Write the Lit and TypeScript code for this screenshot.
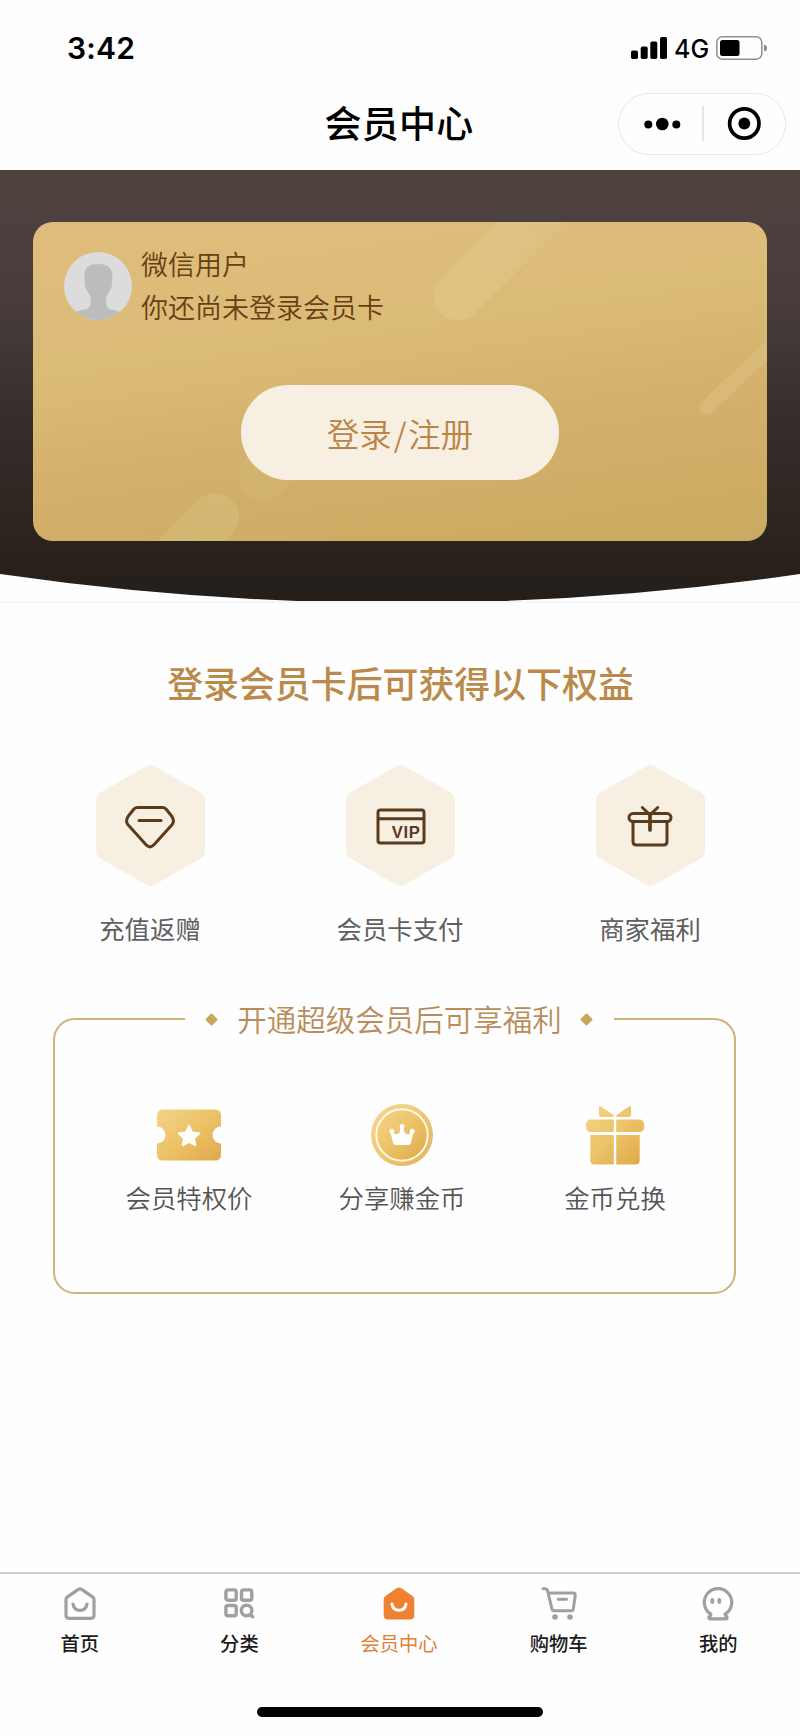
import { LitElement, html, css, svg, TemplateResult } from "lit";
import { customElement, property } from "lit/decorators.js";

const diamond = html`<svg class="glyph" viewBox="0 -3 50 47" width="50" height="47" fill="none" stroke="#5a3b1c" stroke-width="3" stroke-linejoin="round" stroke-linecap="round">
  <path d="M12.500 2.500H37.500Q39.500 2.500 41 4L46.800 11.300Q50 16 47 19.800L28.500 40.200Q25 43.500 21.500 40.200L3 19.800Q0 16 3.200 11.300L9 4Q10.500 2.500 12.500 2.500Z"/>
  <path d="M14 15.500H36"/>
</svg>`;

const vipCard = html`<svg class="glyph" viewBox="-1 -1 51 38" width="51" height="38">
  <g fill="none" stroke="#5a3b1c" stroke-width="3"><rect x="2" y="2" width="46" height="33" rx="2.500"/><path d="M2 10.800H48"/></g>
  <text x="15.800" y="30.200" font-family="Liberation Sans, sans-serif" font-weight="700" font-size="16.600" textLength="28" fill="#5a3b1c">VIP</text>
</svg>`;

const giftLine = html`<svg class="glyph" viewBox="0 0 46 42" width="46" height="42" fill="none" stroke="#5a3b1c" stroke-width="3" stroke-linecap="round" stroke-linejoin="round">
  <rect x="2" y="8.600" width="42" height="8" rx="4"/>
  <path d="M6 17V36.500Q6 40 9.500 40H36.500Q40 40 40 36.500V17"/>
  <path d="M15.300 2.500L23 9.800L30.700 2.500"/><path d="M23 10V25" stroke-width="3.700"/>
</svg>`;

const gold = (id: string) => svg`<defs>
  <linearGradient id=${id} x1="0" y1="0" x2="1" y2="1">
    <stop offset="0" stop-color="#f5d488"/><stop offset=".5" stop-color="#ecc267"/><stop offset="1" stop-color="#dfa84a"/>
  </linearGradient></defs>`;

const ticket = html`<svg viewBox="0 0 64 62" width="64" height="62">${gold("ticket")}
  <path fill="url(#ticket)" d="M6 5.500H58Q64 5.500 64 11.500V22.500A8.500 8.500 0 0 0 64 39.500V50.500Q64 56.500 58 56.500H6Q0 56.500 0 50.500V39.500A8.500 8.500 0 0 0 0 22.500V11.500Q0 5.500 6 5.500Z"/>
  <path fill="#fff" stroke="#fff" stroke-width="1.500" stroke-linejoin="round" d="M32 21.500L35.300 28.200L42.600 29.300L37.300 34.500L38.500 41.500L32 38.200L25.500 41.500L26.700 34.500L21.400 29.300L28.700 28.200Z"/>
</svg>`;

const coin = html`<svg viewBox="0 0 64 62" width="64" height="62">${gold("coin")}
  <circle cx="32" cy="31" r="31" fill="url(#coin)" fill-opacity=".9"/>
  <circle cx="32" cy="31" r="25.700" fill="url(#coin)" stroke="#fffbe9" stroke-width="1.900"/>
  <g fill="#fff"><path d="M22.500 27.500Q26 32.500 29.500 28.500L30.800 22.500H33.200L34.500 28.500Q38 32.500 41.500 27.500L43.500 28.500L40.900 39Q40.500 41 38.500 41H25.500Q23.500 41 23.100 39L20.500 28.500Z"/>
  <circle cx="32" cy="22.500" r="2.400"/><circle cx="21.800" cy="27.200" r="2.400"/><circle cx="42.200" cy="27.200" r="2.400"/></g>
</svg>`;

const giftSolid = html`<svg viewBox="0 0 64 62" width="64" height="62">
  <defs><linearGradient id="gift" gradientUnits="userSpaceOnUse" x1="5" y1="3" x2="60" y2="60">
    <stop offset="0" stop-color="#f5d488"/><stop offset=".5" stop-color="#ecc267"/><stop offset="1" stop-color="#dfa84a"/>
  </linearGradient></defs>
  <g fill="url(#gift)">
    <path d="M16 3.500Q16 1.500 18 2.500L30.500 11V13H18Q16 13 16 11ZM48 3.500Q48 1.500 46 2.500L33.500 11V13H46Q48 13 48 11Z"/>
    <path d="M7 15.500H30.800V28H7Q2.800 27.500 2.800 21.700T7 15.500ZM57 15.500H33.200V28H57Q61.200 27.500 61.200 21.700T57 15.500Z"/>
    <path d="M7.300 31H30.800V60.500H11.300Q7.300 60.500 7.300 56.500ZM33.200 31H56.700V56.500Q56.700 60.500 52.700 60.500H33.200Z"/>
  </g>
</svg>`;

const houseShape = "M15.300 2.400Q17 1.300 18.700 2.400L29.800 10.100Q31 11 31 12.500V28.300Q31 31.300 28 31.300H6Q3 31.300 3 28.300V12.500Q3 11 4.200 10.100Z";

const home = html`<svg viewBox="0 0 34 36" width="34" height="36" fill="none" stroke="#a0a0a0" stroke-width="3.200" stroke-linecap="round">
  <path d=${houseShape}/><path d="M10 17Q11 23.300 17 23.300T24 17"/></svg>`;
const homeActive = html`<svg viewBox="0 0 34 36" width="34" height="36" fill="#ee8231" stroke="#ee8231" stroke-width="2.600">
  <path d=${houseShape}/><path d="M10 17Q11 23.300 17 23.300T24 17" fill="none" stroke="#fff" stroke-width="3" stroke-linecap="round"/></svg>`;
const category = html`<svg viewBox="0 0 34 36" width="34" height="36" fill="none" stroke="#a0a0a0" stroke-width="3.400" stroke-linecap="round">
  <rect x="3.900" y="2.900" width="10.300" height="10.300" rx="2"/><rect x="19.500" y="2.900" width="10.300" height="10.300" rx="2"/>
  <rect x="3.900" y="18.500" width="10.300" height="10.300" rx="2"/><circle cx="24.600" cy="23.500" r="5.300"/><path d="M28.500 27.700L30.700 29.800"/></svg>`;
const cart = html`<svg viewBox="0 0 36 36" width="36" height="36" fill="none" stroke="#a0a0a0" stroke-width="3" stroke-linecap="round" stroke-linejoin="round">
  <path d="M2 1.700H4.200Q6 1.700 6.500 3.600L11 22.200Q11.500 23.800 13 23.800H30.500Q32 23.800 32.300 22.300L34.200 8.300Q34.500 6 32.300 6H7.500"/>
  <path d="M17.300 12.300H25.500"/><circle cx="14" cy="30" r="2.800" fill="#a0a0a0" stroke="none"/><circle cx="29" cy="30" r="2.800" fill="#a0a0a0" stroke="none"/></svg>`;
const profile = html`<svg viewBox="0 0 34 36" width="34" height="36" fill="none" stroke="#a0a0a0" stroke-width="3.200" stroke-linejoin="round">
  <path d="M10 27.200A13.700 13.700 0 1 1 24 27.200Q24.300 28.800 25.800 29.700Q26.800 31.900 24.800 31.900H9.200Q7.200 31.900 8.200 29.700Q9.700 28.800 10 27.200Z"/>
  <ellipse cx="11.300" cy="14" rx="1.900" ry="2.900" fill="#a0a0a0" stroke="none"/><ellipse cx="18.300" cy="14" rx="1.900" ry="2.900" fill="#a0a0a0" stroke="none"/></svg>`;

@customElement("hex-benefit")
class HexBenefit extends LitElement {
  @property() label = "";
  @property({ attribute: false }) icon?: TemplateResult;
  static styles = css`
    :host { display: flex; flex-direction: column; align-items: center; width: 160px; }
    .hex { display: grid; place-items: center; width: 109px; height: 121px; }
    .hex > * { grid-area: 1 / 1; }
    .label { margin-top: 22px; font-size: 25.400px; line-height: 40px; color: #606060; white-space: nowrap; }
    svg { display: block; }
  `;
  render() {
    return html`<div class="hex">
        <svg viewBox="0 0 109 121" width="109" height="121"><path fill="#f8efe3" d="M50.500 1.200Q54.500 -1 58.500 1.200L104 27Q109 30 109 35V86Q109 91 104 94L58.500 119.800Q54.500 122 50.500 119.800L5 94Q0 91 0 86V35Q0 30 5 27Z"/></svg>
        ${this.icon}
      </div><div class="label">${this.label}</div>`;
  }
}

@customElement("tab-item")
class TabItem extends LitElement {
  @property() label = "";
  @property({ type: Boolean, reflect: true }) active = false;
  @property({ attribute: false }) icon?: TemplateResult;
  static styles = css`
    :host { display: flex; flex-direction: column; align-items: center; flex: 1; padding-top: 13px; color: #1c1c1c; font-weight: 500; }
    :host([active]) { color: #de8036; font-weight: 400; }
    .label { margin-top: 5px; font-size: 19.300px; line-height: 30px; white-space: nowrap; }
    svg { display: block; }
  `;
  render() {
    return html`${this.icon}<div class="label">${this.label}</div>`;
  }
}

@customElement("app-root")
class AppRoot extends LitElement {
  static styles = css`
    :host {
      display: flex; flex-direction: column; width: 800px; height: 1736px; overflow: hidden;
      box-sizing: border-box; background: #fefefe; font-family: "Noto Sans CJK SC", sans-serif;
    }
    svg { display: block; }
    .status { display: flex; justify-content: space-between; align-items: center; height: 60px; padding: 18px 32px 0 67px; font-family: Inter, sans-serif; }
    .time { font-size: 30px; font-weight: 600; color: #000; line-height: 36px; letter-spacing: .2px; }
    .signals { display: flex; align-items: center; color: #000; }
    .net { margin: 2px 6px 0 6px; width: 36px; font-size: 25px; font-weight: 500; line-height: 30px; }
    .nav { display: grid; grid-template-columns: 1fr auto 1fr; align-items: center; height: 62px; margin: 15px 14px 15px 12px; }
    .title { grid-column: 2; font-size: 37px; font-weight: 500; letter-spacing: .3px; line-height: 54px; margin: -5px 0 0; color: #000; }
    .capsule { grid-column: 3; justify-self: end; display: flex; align-items: center; box-sizing: border-box; width: 168px; height: 62px; border: 1px solid #e8e8e8; border-radius: 31px; }
    .hero { display: grid; height: 431px; overflow: hidden; border-bottom: 2px solid #f4f5f5; }
    .hero > * { grid-area: 1 / 1; }
    .card { display: grid; margin: 52px 33px 0; width: 734px; height: 319px; overflow: hidden; border-radius: 20px; background: linear-gradient(172deg, #e0bc7c 0%, #dbbc77 36%, #d4b16b 62%, #caa960 100%); }
    .card > * { grid-area: 1 / 1; }
    .content { display: flex; flex-direction: column; align-items: center; }
    .user { align-self: stretch; display: flex; align-items: flex-start; padding: 21px 0 0 31px; }
    .avatar { margin-top: 9px; }
    .names { margin-left: 9px; font-size: 27px; line-height: 42.500px; font-weight: 350; color: #664012; }
    .login { display: flex; align-items: center; justify-content: center; width: 318px; height: 95px; margin-top: 57px; padding: 0; border: 0; border-radius: 48px; background: #f7efe1; color: #b98444; font: 350 32.400px/46px "Noto Sans CJK SC", sans-serif; }
    .slash { margin: 0 2px; }
    .heading { margin: 50px 0 0 1px; text-align: center; font-size: 35.900px; line-height: 58px; font-weight: 500; color: #b98a49; }
    .benefits { display: flex; justify-content: space-between; margin: 54px 70px 0; }
    .super { display: flex; flex-direction: column; align-items: center; box-sizing: border-box; width: 683px; height: 276px; margin: 70px 0 0 53px; border: 2px solid #cfb277; border-radius: 22px; }
    .legend { display: flex; align-items: center; justify-content: space-between; box-sizing: border-box; width: 429px; height: 44px; margin: -24px 0 0 9px; padding: 0 22px; background: #fefefe; color: #b98d59; font-size: 29.500px; font-weight: 350; line-height: 44px; white-space: nowrap; }
    .legend span { margin-left: 1px; }
    .gem { width: 9px; height: 9px; margin-top: 2px; transform: rotate(45deg); border-radius: 1px; background: #c9a560; }
    .perks { display: flex; justify-content: space-between; width: 586px; margin: 64px 0 0 15px; }
    .perk { display: flex; flex-direction: column; align-items: center; width: 160px; font-size: 25.400px; line-height: 38px; color: #555; font-weight: 350; }
    .perk span { margin-top: 12px; }
    .tabs { display: flex; height: 100px; margin-top: auto; padding-right: 2px; border-top: 2px solid #cecece; }
    .homebar { width: 286px; height: 10px; margin: 33px auto 19px; border-radius: 5px; background: #000; }
  `;

  perks = [
    { label: "会员特权价", icon: ticket },
    { label: "分享赚金币", icon: coin },
    { label: "金币兑换", icon: giftSolid },
  ];

  render() {
    return html`
      <div class="status">
        <div class="time">3:42</div>
        <div class="signals">
          <svg width="37" height="24" viewBox="0 0 37 24"><rect x="0" y="14.500" width="7" height="8.500" rx="1.800"/><rect x="9.700" y="10.500" width="7" height="12.500" rx="1.800"/><rect x="19.300" y="5.500" width="7" height="17.500" rx="1.800"/><rect x="29" y="1" width="7" height="22" rx="1.800"/></svg>
          <div class="net">4G</div>
          <svg width="52" height="24" viewBox="0 0 52 24"><rect x=".8" y=".8" width="45" height="22.400" rx="5.500" fill="none" stroke="#8f8f8f" stroke-width="1.500"/><rect x="4" y="4" width="19.500" height="16" rx="2.500"/><path d="M48 8.500Q51 9 51 12T48 15.500Z" fill="#8a8a8a"/></svg>
        </div>
      </div>
      <div class="nav">
        <h1 class="title">会员中心</h1>
        <div class="capsule">
          <svg width="166" height="60" viewBox="0 0 166 60"><circle cx="29.300" cy="30.500" r="4"/><circle cx="43.300" cy="30" r="6.300"/><circle cx="57.300" cy="30.500" r="4"/><path d="M84 11.500V47" stroke="#d8d8d8" stroke-width="1.300"/><circle cx="125.300" cy="29.500" r="14.700" fill="none" stroke="#000" stroke-width="3.700"/><circle cx="125.300" cy="29.500" r="5.900"/></svg>
        </div>
      </div>
      <section class="hero">
        <svg width="800" height="431" viewBox="0 0 800 431"><defs><linearGradient id="night" x1="0" y1="0" x2="0" y2="1"><stop offset="0" stop-color="#4f4340"/><stop offset=".3" stop-color="#483d3b"/><stop offset=".6" stop-color="#352d29"/><stop offset=".88" stop-color="#29221d"/><stop offset="1" stop-color="#241e1a"/></linearGradient></defs><path fill="url(#night)" d="M0 0H800V404Q400 461.800 0 404Z"/></svg>
        <div class="card">
          <svg width="734" height="319" viewBox="0 0 734 319" fill="none" stroke-linecap="round">
            <defs><linearGradient id="ray" gradientUnits="userSpaceOnUse" x1="420" y1="80" x2="520" y2="-20"><stop offset="0" stop-color="#e2c583" stop-opacity=".75"/><stop offset="1" stop-color="#dfc489" stop-opacity=".6"/></linearGradient></defs>
            <path d="M425 74L545 -46" stroke="url(#ray)" stroke-width="48"/>
            <path d="M674 185L760 104" stroke="#dfc283" stroke-opacity=".5" stroke-width="15"/>
            <path d="M182 295L100 377" stroke="#d6bf7c" stroke-opacity=".55" stroke-width="48"/>
            <path d="M230 254L270 214" stroke="#d5bb77" stroke-opacity=".4" stroke-width="48"/>
          </svg>
          <div class="content">
            <div class="user">
              <svg class="avatar" width="68" height="68" viewBox="0 0 68 68"><defs><clipPath id="face"><circle cx="34" cy="34" r="34"/></clipPath></defs><g clip-path="url(#face)"><rect width="68" height="68" fill="#dcdcdc"/><path fill="#bcbcbc" d="M20.300 23C20.500 15 26 12 34.300 12S48.200 15 48.400 23L47.800 34C47 39 42.300 42 42 48C41.800 54 44 57 47 57.500C53 57.700 58 61 62 65V70H6V65C10 60 15 58 21 57.500C25 57 27.300 54 27 48C26.700 42 22 39 21 34Z"/></g></svg>
              <div class="names"><div>微信用户</div><div>你还尚未登录会员卡</div></div>
            </div>
            <button class="login">登录<span class="slash">/</span>注册</button>
          </div>
        </div>
      </section>
      <div class="heading">登录会员卡后可获得以下权益</div>
      <div class="benefits">
        <hex-benefit label="充值返赠" .icon=${diamond}></hex-benefit>
        <hex-benefit label="会员卡支付" .icon=${vipCard}></hex-benefit>
        <hex-benefit label="商家福利" .icon=${giftLine}></hex-benefit>
      </div>
      <section class="super">
        <div class="legend"><i class="gem"></i><span>开通超级会员后可享福利</span><i class="gem"></i></div>
        <div class="perks">${this.perks.map((p) => html`<div class="perk">${p.icon}<span>${p.label}</span></div>`)}</div>
      </section>
      <nav class="tabs">
        <tab-item label="首页" .icon=${home}></tab-item>
        <tab-item label="分类" .icon=${category}></tab-item>
        <tab-item label="会员中心" active .icon=${homeActive}></tab-item>
        <tab-item label="购物车" .icon=${cart}></tab-item>
        <tab-item label="我的" .icon=${profile}></tab-item>
      </nav>
      <div class="homebar"></div>
    `;
  }
}
